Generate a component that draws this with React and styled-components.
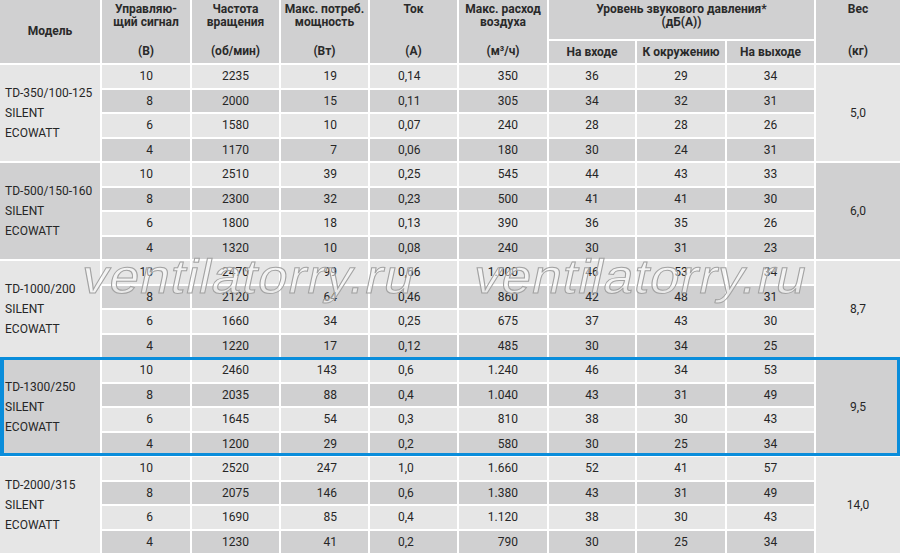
import styled, { createGlobalStyle, css } from "styled-components";

const GlobalStyle = createGlobalStyle`
  body {
    margin: 0;
    background: #ffffff;
    font-family: Roboto, "Liberation Sans", sans-serif;
  }
`;

const LIGHT = "#e6e6e6";
const DARK = "#d0d0d1";
const HEAD = "#d0d0d1";
const BLUE = "#0a8ddb";

const columns = "100px 88px 87px 87px 87px 88px 86px 88px 87px 84px";

const cols = [
  { align: "right", pad: 37 },
  { align: "center", pad: 0 },
  { align: "right", pad: 31 },
  { align: "left", pad: 28 },
  { align: "right", pad: 29 },
  { align: "center", pad: 0 },
  { align: "center", pad: 0 },
  { align: "center", pad: 0 },
];

const groups = [
  {
    model: ["TD-350/100-125", "SILENT", "ECOWATT"],
    weight: "5,0",
    rows: [
      ["10", "2235", "19", "0,14", "350", "36", "29", "34"],
      ["8", "2000", "15", "0,11", "305", "34", "32", "31"],
      ["6", "1580", "10", "0,07", "240", "28", "28", "26"],
      ["4", "1170", "7", "0,06", "180", "30", "24", "31"],
    ],
  },
  {
    model: ["TD-500/150-160", "SILENT", "ECOWATT"],
    weight: "6,0",
    rows: [
      ["10", "2510", "39", "0,25", "545", "44", "43", "33"],
      ["8", "2300", "32", "0,23", "500", "41", "41", "30"],
      ["6", "1800", "18", "0,13", "390", "36", "35", "26"],
      ["4", "1320", "10", "0,08", "240", "30", "31", "23"],
    ],
  },
  {
    model: ["TD-1000/200", "SILENT", "ECOWATT"],
    weight: "8,7",
    rows: [
      ["10", "2470", "99", "0,66", "1.000", "46", "53", "34"],
      ["8", "2120", "64", "0,46", "860", "42", "48", "31"],
      ["6", "1660", "34", "0,25", "675", "37", "43", "30"],
      ["4", "1220", "17", "0,12", "485", "30", "34", "25"],
    ],
  },
  {
    model: ["TD-1300/250", "SILENT", "ECOWATT"],
    weight: "9,5",
    highlight: true,
    rows: [
      ["10", "2460", "143", "0,6", "1.240", "46", "34", "53"],
      ["8", "2035", "88", "0,4", "1.040", "43", "31", "49"],
      ["6", "1645", "54", "0,3", "810", "38", "30", "43"],
      ["4", "1200", "29", "0,2", "580", "30", "25", "34"],
    ],
  },
  {
    model: ["TD-2000/315", "SILENT", "ECOWATT"],
    weight: "14,0",
    rows: [
      ["10", "2520", "247", "1,0", "1.660", "52", "41", "57"],
      ["8", "2075", "146", "0,6", "1.380", "43", "31", "49"],
      ["6", "1690", "85", "0,4", "1.120", "38", "30", "43"],
      ["4", "1230", "41", "0,2", "790", "30", "25", "34"],
    ],
  },
];

const Page = styled.div`
  position: relative;
  width: 900px;
  height: 555px;
  overflow: hidden;
  display: flex;
  flex-direction: column;
  gap: 2px;
`;

const HeadGrid = styled.div`
  display: grid;
  grid-template-columns: ${columns};
  grid-template-rows: 39px 22px;
  gap: 2px;
`;

const HeadCell = styled.div`
  background: ${HEAD};
  color: #2a2a2a;
  font-weight: 700;
  font-size: 12px;
  line-height: 13px;
  text-align: center;
  grid-column: ${(p) => p.$col};
  grid-row: ${(p) => p.$row || "1 / 3"};
  display: flex;
  flex-direction: column;
  align-items: center;
  justify-content: ${(p) => (p.$center ? "center" : "flex-start")};
  padding-top: ${(p) => (p.$center ? 0 : 3)}px;
`;

const SplitCell = styled.div`
  background: ${HEAD};
  color: #2a2a2a;
  font-weight: 700;
  font-size: 12px;
  line-height: 13px;
  text-align: center;
  grid-column: ${(p) => p.$col};
  grid-row: 1 / 3;
  display: grid;
  grid-template-rows: 1fr 24px;
`;

const Title = styled.div`
  padding-top: 3px;
  white-space: pre-line;
`;

const Unit = styled.div`
  display: flex;
  align-items: center;
  justify-content: center;
`;

const Group = styled.div`
  position: relative;
  display: grid;
  grid-template-columns: ${columns};
  grid-template-rows: repeat(4, 22.5px);
  gap: 2px;

  ${(p) =>
    p.$highlight &&
    css`
      &::after {
        content: "";
        position: absolute;
        top: -2px;
        bottom: -1px;
        left: 0;
        right: 0;
        border: 3px solid ${BLUE};
        border-left-width: 4px;
        pointer-events: none;
        z-index: 2;
      }
    `}
`;

const ModelCell = styled.div`
  grid-column: 1;
  grid-row: 1 / 5;
  background: ${(p) => (p.$dark ? DARK : LIGHT)};
  color: #262626;
  font-size: 12px;
  line-height: 20px;
  padding-left: 5px;
  display: flex;
  flex-direction: column;
  justify-content: center;
`;

const WeightCell = styled.div`
  grid-column: 10;
  grid-row: 1 / 5;
  background: ${(p) => (p.$dark ? DARK : LIGHT)};
  color: #262626;
  font-size: 12px;
  display: flex;
  align-items: center;
  justify-content: center;
`;

const Cell = styled.div`
  background: ${(p) => (p.$dark ? DARK : LIGHT)};
  color: #262626;
  font-size: 12px;
  line-height: 22.5px;
  text-align: ${(p) => p.$align};
  padding-left: ${(p) => (p.$align === "left" ? p.$pad : 0)}px;
  padding-right: ${(p) => (p.$align === "right" ? p.$pad : 0)}px;
`;

const Watermark = styled.div`
  position: absolute;
  top: 253px;
  left: ${(p) => p.$left}px;
  font-family: "Liberation Sans", Arial, sans-serif;
  font-size: 48px;
  line-height: 48px;
  letter-spacing: 1px;
  color: rgba(255, 255, 255, 0.5);
  -webkit-text-stroke: 1px #a2a2a2;
  transform: scaleX(1.1) skewX(-11deg);
  transform-origin: left top;
  pointer-events: none;
  z-index: 3;
  white-space: nowrap;
`;

const splitHeads = [
  { col: 2, title: "Управляю-\nщий сигнал", unit: "(В)" },
  { col: 3, title: "Частота\nвращения", unit: "(об/мин)" },
  { col: 4, title: "Макс. потреб.\nмощность", unit: "(Вт)" },
  { col: 5, title: "Ток", unit: "(А)" },
  { col: 6, title: "Макс. расход\nвоздуха", unit: "(м³/ч)" },
];

const App = () => {
  return (
    <>
      <GlobalStyle />
      <Page>
        <HeadGrid>
          <HeadCell $col={1} $center>
            Модель
          </HeadCell>
          {splitHeads.map((h) => (
            <SplitCell key={h.col} $col={h.col}>
              <Title>{h.title}</Title>
              <Unit>{h.unit}</Unit>
            </SplitCell>
          ))}
          <HeadCell $col="7 / 10" $row="1">
            Уровень звукового давления*
            <br />
            (дБ(А))
          </HeadCell>
          <HeadCell $col={7} $row="2" $center>
            На входе
          </HeadCell>
          <HeadCell $col={8} $row="2" $center>
            К окружению
          </HeadCell>
          <HeadCell $col={9} $row="2" $center>
            На выходе
          </HeadCell>
          <SplitCell $col={10}>
            <Title>Вес</Title>
            <Unit>(кг)</Unit>
          </SplitCell>
        </HeadGrid>

        {groups.map((g, gi) => (
          <Group key={g.model[0]} $highlight={g.highlight}>
            <ModelCell $dark={gi % 2 === 1}>
              {g.model.map((line) => (
                <div key={line}>{line}</div>
              ))}
            </ModelCell>
            {g.rows.map((row, ri) =>
              row.map((value, ci) => (
                <Cell
                  key={`${ri}-${ci}`}
                  $dark={ri % 2 === 1}
                  $align={cols[ci].align}
                  $pad={cols[ci].pad}
                >
                  {value}
                </Cell>
              ))
            )}
            <WeightCell $dark={gi % 2 === 1}>{g.weight}</WeightCell>
          </Group>
        ))}

        <Watermark $left={88}>ventilatorry.ru</Watermark>
        <Watermark $left={480}>ventilatorry.ru</Watermark>
      </Page>
    </>
  );
};

export default App;
